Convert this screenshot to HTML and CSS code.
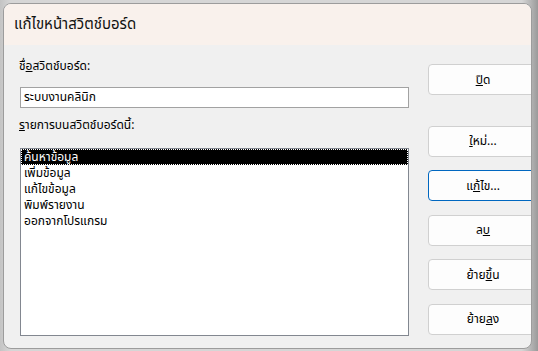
FILE: index.html
```html
<!DOCTYPE html>
<html lang="th">
  <head>
    <meta charset="UTF-8">
    <title>แก้ไขหน้าสวิตช์บอร์ด</title>
    <link rel="stylesheet" href="styles.css">
  </head>
  <body>
    <div class="window">
      <div class="titlebar">แก้ไขหน้าสวิตช์บอร์ด</div>

      <div class="dialog-body">
        <!-- left side: name + item list -->
        <div class="main-col">
          <div class="label">ชื่<u>อ</u>สวิตช์บอร์ด:</div>
          <div class="textbox">ระบบงานคลินิก</div>
          <div class="label label-list"><u>ร</u>ายการบนสวิตช์บอร์ดนี้:</div>
          <ul class="listbox">
            <li class="selected">ค้นหาข้อมูล</li>
            <li>เพิ่มข้อมูล</li>
            <li>แก้ไขข้อมูล</li>
            <li>พิมพ์รายงาน</li>
            <li>ออกจากโปรแกรม</li>
          </ul>
        </div>

        <!-- right side: command buttons -->
        <div class="button-col">
          <button class="btn btn-close"><u>ป</u>ิด</button>
          <button class="btn"><u>ใ</u>หม่...</button>
          <button class="btn focused">แ<u>ก้</u>ไข...</button>
          <button class="btn">ล<u>บ</u></button>
          <button class="btn">ย้าย<u>ขึ้</u>น</button>
          <button class="btn">ย้าย<u>ล</u>ง</button>
        </div>
      </div>
    </div>
  </body>
</html>
```

FILE: styles.css
```css
/* Page around the dialog */
body {
    margin: 0;
    padding: 3px 3px 2px 3px;
    width: 538px;
    height: 351px;
    box-sizing: border-box;
    background: linear-gradient(to right, #c4c4c4, #d6d6d6 2%, #d6d6d6 97%, #9a9a9a);
    font-family: Tahoma, "Noto Sans Thai", "Leelawadee UI", sans-serif;
    color: #000;
    overflow: hidden;
}

/* Dialog window */
.window {
    width: 529px;
    height: 346px;
    box-sizing: border-box;
    border: 1px solid #9c9c9c;
    border-radius: 8px;
    background: #f0f0f0;
    overflow: hidden;
    display: flex;
    flex-direction: column;
}

.titlebar {
    height: 41px;
    flex: none;
    padding-left: 10px;
    display: flex;
    align-items: center;
    background: #f9f1ec;
    font-size: 15px;
    color: #111;
}

.dialog-body {
    flex: 1;
    display: flex;
    gap: 19px;
    padding: 12px 0 0 16px;
}

/* Left column */
.main-col {
    width: 389px;
    flex: none;
    display: flex;
    flex-direction: column;
}

.label {
    height: 18px;
    line-height: 18px;
    font-size: 12px;
    margin-left: -1px;
}

.label-list {
    margin-top: 8px;
}

.textbox {
    margin-top: 12px;
    height: 21px;
    box-sizing: border-box;
    border: 1px solid #a2a2a2;
    background: #fff;
    padding-left: 3px;
    font-size: 12px;
    line-height: 19px;
}

.listbox {
    list-style: none;
    margin: 14px 0 0 0;
    padding: 0;
    height: 188px;
    box-sizing: border-box;
    border: 1px solid #828790;
    background: #fff;
}

.listbox li {
    height: 16px;
    line-height: 16px;
    padding-left: 3px;
    font-size: 12px;
}

.listbox li.selected {
    background: #000;
    color: #fff;
    outline: 1px dotted #fff;
    outline-offset: -1px;
}

/* Right column */
.button-col {
    flex: none;
    display: flex;
    flex-direction: column;
    gap: 13.5px;
    padding-top: 7px;
}

.btn {
    width: 110px;
    height: 31px;
    flex: none;
    box-sizing: border-box;
    border: 1px solid #d0d0d0;
    border-radius: 4px;
    background: #fdfdfd;
    font-family: inherit;
    font-size: 12px;
    color: #000;
    padding: 0;
}

.btn-close {
    margin-bottom: 17px;
}

.btn.focused {
    border-color: #0067c0;
}
```
